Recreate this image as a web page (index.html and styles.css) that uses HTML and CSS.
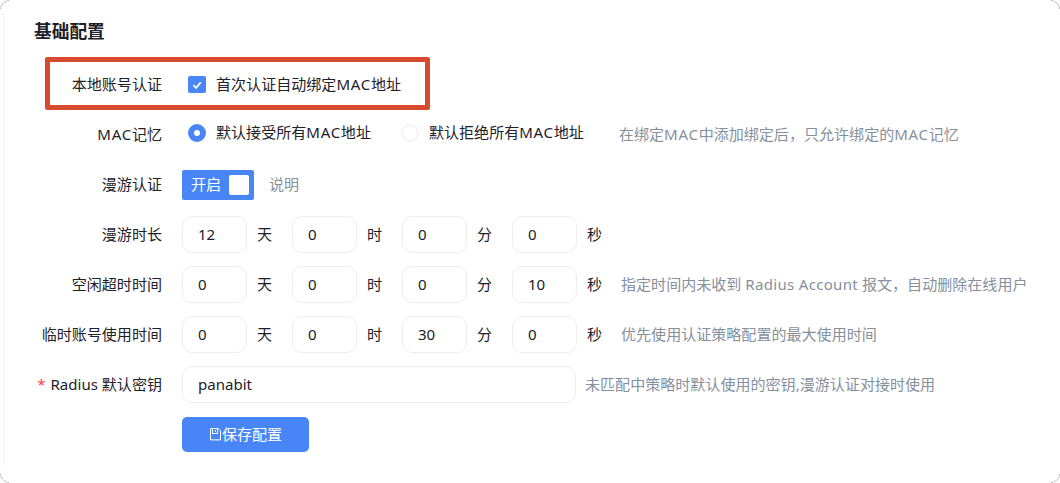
FILE: index.html
```
<!DOCTYPE html>
<html lang="zh-CN">
<head>
    <meta charset="UTF-8">
    <meta name="viewport" content="width=device-width, initial-scale=1.0">
    <title>基础配置</title>
    <link rel="stylesheet" href="styles.css">
</head>
<body>
    <div class="frame">
        <form class="panel">
            <h2>基础配置</h2>

            <div class="form-item highlight">
                <label class="item-label">本地账号认证</label>
                <div class="item-content">
                    <label class="option">
                        <span class="checkbox">
                            <svg width="18" height="17" viewBox="0 0 18 17"><path d="M5.4 9.2l2.7 2.7 4.6-5.6" fill="none" stroke="#fff" stroke-width="1.8"/></svg>
                        </span>
                        <span class="option-text">首次认证自动绑定<span class="mac">MAC</span>地址</span>
                    </label>
                </div>
            </div>

            <div class="form-item">
                <label class="item-label"><span class="mac">MAC</span>记忆</label>
                <div class="item-content radios">
                    <label class="option">
                        <span class="radio checked"></span>
                        <span class="option-text">默认接受所有<span class="mac">MAC</span>地址</span>
                    </label>
                    <label class="option">
                        <span class="radio"></span>
                        <span class="option-text">默认拒绝所有<span class="mac">MAC</span>地址</span>
                    </label>
                </div>
                <span class="tip tip-radio">在绑定<span class="mac">MAC</span>中添加绑定后，只允许绑定的<span class="mac">MAC</span>记忆</span>
            </div>

            <div class="form-item">
                <label class="item-label">漫游认证</label>
                <div class="item-content">
                    <div class="switch"><em>开启</em><i></i></div>
                </div>
                <span class="tip tip-switch">说明</span>
            </div>

            <div class="form-item">
                <label class="item-label">漫游时长</label>
                <div class="item-content">
                    <input type="text" class="num" value="12"><span class="unit">天</span>
                    <input type="text" class="num" value="0"><span class="unit">时</span>
                    <input type="text" class="num" value="0"><span class="unit">分</span>
                    <input type="text" class="num" value="0"><span class="unit">秒</span>
                </div>
            </div>

            <div class="form-item">
                <label class="item-label">空闲超时时间</label>
                <div class="item-content">
                    <input type="text" class="num" value="0"><span class="unit">天</span>
                    <input type="text" class="num" value="0"><span class="unit">时</span>
                    <input type="text" class="num" value="0"><span class="unit">分</span>
                    <input type="text" class="num" value="10"><span class="unit">秒</span>
                </div>
                <span class="tip">指定时间内未收到 <span class="latin">Radius Account</span> 报文，自动删除在线用户</span>
            </div>

            <div class="form-item">
                <label class="item-label">临时账号使用时间</label>
                <div class="item-content">
                    <input type="text" class="num" value="0"><span class="unit">天</span>
                    <input type="text" class="num" value="0"><span class="unit">时</span>
                    <input type="text" class="num" value="30"><span class="unit">分</span>
                    <input type="text" class="num" value="0"><span class="unit">秒</span>
                </div>
                <span class="tip">优先使用认证策略配置的最大使用时间</span>
            </div>

            <div class="form-item">
                <label class="item-label"><span class="required">*</span>Radius 默认密钥</label>
                <div class="item-content">
                    <input type="text" class="secret" value="panabit">
                </div>
                <span class="tip tip-secret">未匹配中策略时默认使用的密钥,漫游认证对接时使用</span>
            </div>

            <div class="form-item">
                <span class="item-label"></span>
                <button type="button" class="save">
                    <svg width="13" height="13" viewBox="0 0 13 13" fill="none" stroke="#fff"><path d="M1.5.5h7.6l2.4 2.4v9h-10z"/><path d="M3.5.5v5h5v-5M6.5 2v2"/></svg>
                    <span>保存配置</span>
                </button>
            </div>
        </form>
    </div>
</body>
</html>
```

FILE: styles.css
```
*,
*::after {
    box-sizing: border-box;
}

body {
    margin: 0;
    background-color: #fff;
    color: #1d2129;
    font-family: "Noto Sans", "Noto Sans CJK SC", sans-serif;
    font-size: 15.05px;
    line-height: 20px;
}

/* thin grey arcs in the four corners */
.frame {
    height: 483px;
    padding: 13px 0 17px 3px;
    overflow: hidden;
    background-image:
        radial-gradient(circle at 10px 10px, transparent 9px, #b4b4b4 9.6px, transparent 10.3px),
        radial-gradient(circle at -1px 10px, transparent 9px, #b4b4b4 9.6px, transparent 10.3px),
        radial-gradient(circle at 10px -1px, transparent 9px, #b4b4b4 9.6px, transparent 10.3px),
        radial-gradient(circle at -1px -1px, transparent 9px, #b4b4b4 9.6px, transparent 10.3px);
    background-position: left top, right top, left bottom, right bottom;
    background-size: 9px 9px;
    background-repeat: no-repeat;
}

.panel {
    height: 453px;
    padding: 0 0 0 17px;
    border-left: 1px solid #f2f2f3;
}

h2 {
    height: 53px;
    margin: 0;
    padding: 5px 0 0 13px;
    font-size: 17.7px;
    line-height: 26px;
    font-weight: 700;
}

.form-item {
    display: flex;
    align-items: center;
    height: 37px;
    margin-bottom: 13px;
    white-space: nowrap;
}

.item-label {
    width: 141px;
    margin-right: 20px;
    padding-bottom: 2px;
    text-align: right;
}

.item-content {
    display: flex;
    align-items: center;
}

.required {
    margin-right: 5px;
    color: #f53f3f;
}

.mac {
    letter-spacing: 0.7px;
}

.latin {
    letter-spacing: 0.3px;
}

/* red marker frame around the first option */
.highlight {
    position: relative;
}

.highlight::after {
    content: "";
    position: absolute;
    left: 24px;
    top: -9px;
    width: 385px;
    height: 53px;
    border: 5px solid #d74a2e;
    border-radius: 2px;
}

.option {
    display: flex;
    align-items: center;
    margin-left: 6px;
}

.option-text {
    margin-left: 10px;
    padding-bottom: 2px;
}

.checkbox {
    width: 18px;
    height: 17px;
    border-radius: 2px;
    background-color: #4886f8;
}

.checkbox svg {
    display: block;
}

.radios {
    margin-top: -3px;
}

.radios .option + .option {
    margin-left: 30px;
}

.radio {
    width: 18px;
    height: 18px;
    border: 2px solid #f3f4fa;
    border-radius: 50%;
}

.radio.checked {
    border: 6px solid #4886f8;
    background-color: #fff;
}

.switch {
    display: flex;
    align-items: center;
    justify-content: space-between;
    width: 72px;
    height: 30px;
    padding: 0 5px 0 9px;
    border-radius: 2px;
    background-color: #4886f8;
    color: #fff;
}

.switch em {
    padding-bottom: 1px;
    font-style: normal;
}

.switch i {
    width: 20px;
    height: 20px;
    border-radius: 2px;
    background-color: #fff;
}

input {
    height: 37px;
    padding: 0 15px 2px;
    border: 1px solid #eee;
    border-radius: 10px;
    outline: none;
    background-color: #fff;
    color: #1d2129;
    font: inherit;
}

.num {
    width: 65px;
}

.unit {
    width: 45px;
    padding: 0 0 2px 10px;
}

.secret {
    width: 394px;
}

.tip {
    margin-left: -1px;
    padding-bottom: 2px;
    color: #86909c;
}

.tip-radio {
    margin-left: 35px;
}

.tip-switch {
    margin-left: 15px;
}

.tip-secret {
    margin-left: 9px;
}

.save {
    display: flex;
    align-items: center;
    justify-content: center;
    width: 127px;
    height: 35px;
    padding: 0;
    border: none;
    border-radius: 5px;
    background-color: #4886f8;
    color: #fff;
    font: inherit;
    cursor: pointer;
}

.save span {
    padding-bottom: 2px;
}
```
